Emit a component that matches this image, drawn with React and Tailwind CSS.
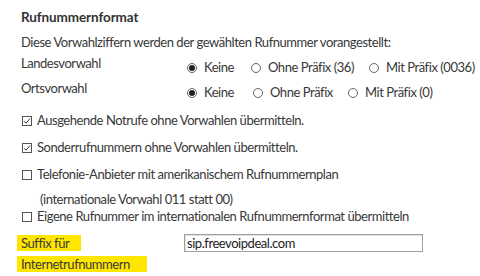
import React from 'react'

const FONT = { fontFamily: 'Lato, "Noto Sans", sans-serif' }

function Radio({ checked, label, width }) {
  return (
    <div className="flex items-center h-[18px] shrink-0" style={width ? { width } : undefined}>
      <span className="w-[10px] h-[10px] rounded-full border border-[#666] flex items-center justify-center shrink-0">
        {checked && <span className="w-[6px] h-[6px] rounded-full bg-[#222]" />}
      </span>
      <span className="ml-[7px] whitespace-nowrap">{label}</span>
    </div>
  )
}

function Check({ checked, children, className = '' }) {
  return (
    <div className={`flex items-center h-[18px] ${className}`}>
      <span className="w-[10px] h-[10px] border border-[#555] flex items-center justify-center shrink-0 ml-[1px]">
        {checked && (
          <svg width="8" height="8" viewBox="0 0 8 8" fill="none" stroke="#333" strokeWidth="1">
            <path d="M1 4.2 L3 6.2 L7 1.5" />
          </svg>
        )}
      </span>
      <span className="ml-[5px] whitespace-nowrap">{children}</span>
    </div>
  )
}

export default function App() {
  return (
    <div className="w-[480px] h-[276px] bg-white text-[#383838] text-[13px] tracking-[-0.45px] pl-[21px] pt-[8px] overflow-hidden" style={FONT}>
      <div className="h-[18px] leading-[18px] font-bold text-[13.5px] tracking-[-0.1px] text-[#333]">Rufnummernformat</div>
      <div className="mt-[7px] h-[18px] leading-[18px]">Diese Vorwahlziffern werden der gewählten Rufnummer vorangestellt:</div>

      <div className="mt-[3px] flex h-[25px]">
        <div className="w-[166px] h-[18px] leading-[18px]">Landesvorwahl</div>
        <div className="flex pt-[5px]">
          <Radio checked label="Keine" width={64} />
          <Radio label="Ohne Präfix (36)" width={118} />
          <Radio label="Mit Präfix (0036)" />
        </div>
      </div>

      <div className="flex h-[33px]">
        <div className="w-[166px] h-[18px] leading-[18px]">Ortsvorwahl</div>
        <div className="flex pt-[5px]">
          <Radio checked label="Keine" width={66} />
          <Radio label="Ohne Präfix" width={95} />
          <Radio label="Mit Präfix (0)" />
        </div>
      </div>

      <Check checked>Ausgehende Notrufe ohne Vorwahlen übermitteln.</Check>
      <Check checked className="mt-[9px]">Sonderrufnummern ohne Vorwahlen übermitteln.</Check>
      <Check className="mt-[9px]">Telefonie-Anbieter mit amerikanischem Rufnummernplan</Check>
      <div className="mt-[6px] h-[18px] leading-[18px] pl-[19px]">(internationale Vorwahl 011 statt 00)</div>
      <Check>Eigene Rufnummer im internationalen Rufnummernformat übermitteln</Check>

      <div className="mt-[8px] flex">
        <div className="w-[167px] -ml-[4px]">
          <div className="w-[64px] bg-[#ffe600] h-[16px] leading-[16px] px-[4px] mt-[1px]">Suffix für</div>
          <div className="w-[130px] bg-[#ffe600] h-[16px] leading-[16px] px-[4px] mt-[5px]">Internetrufnummern</div>
        </div>
        <div className="w-[239px] h-[18px] border border-[#a0a0a0] shadow-[inset_1px_1px_0_#e0e0e0] px-[2px] leading-[16px] text-[#222]">
          sip.freevoipdeal.com
        </div>
      </div>
    </div>
  )
}
